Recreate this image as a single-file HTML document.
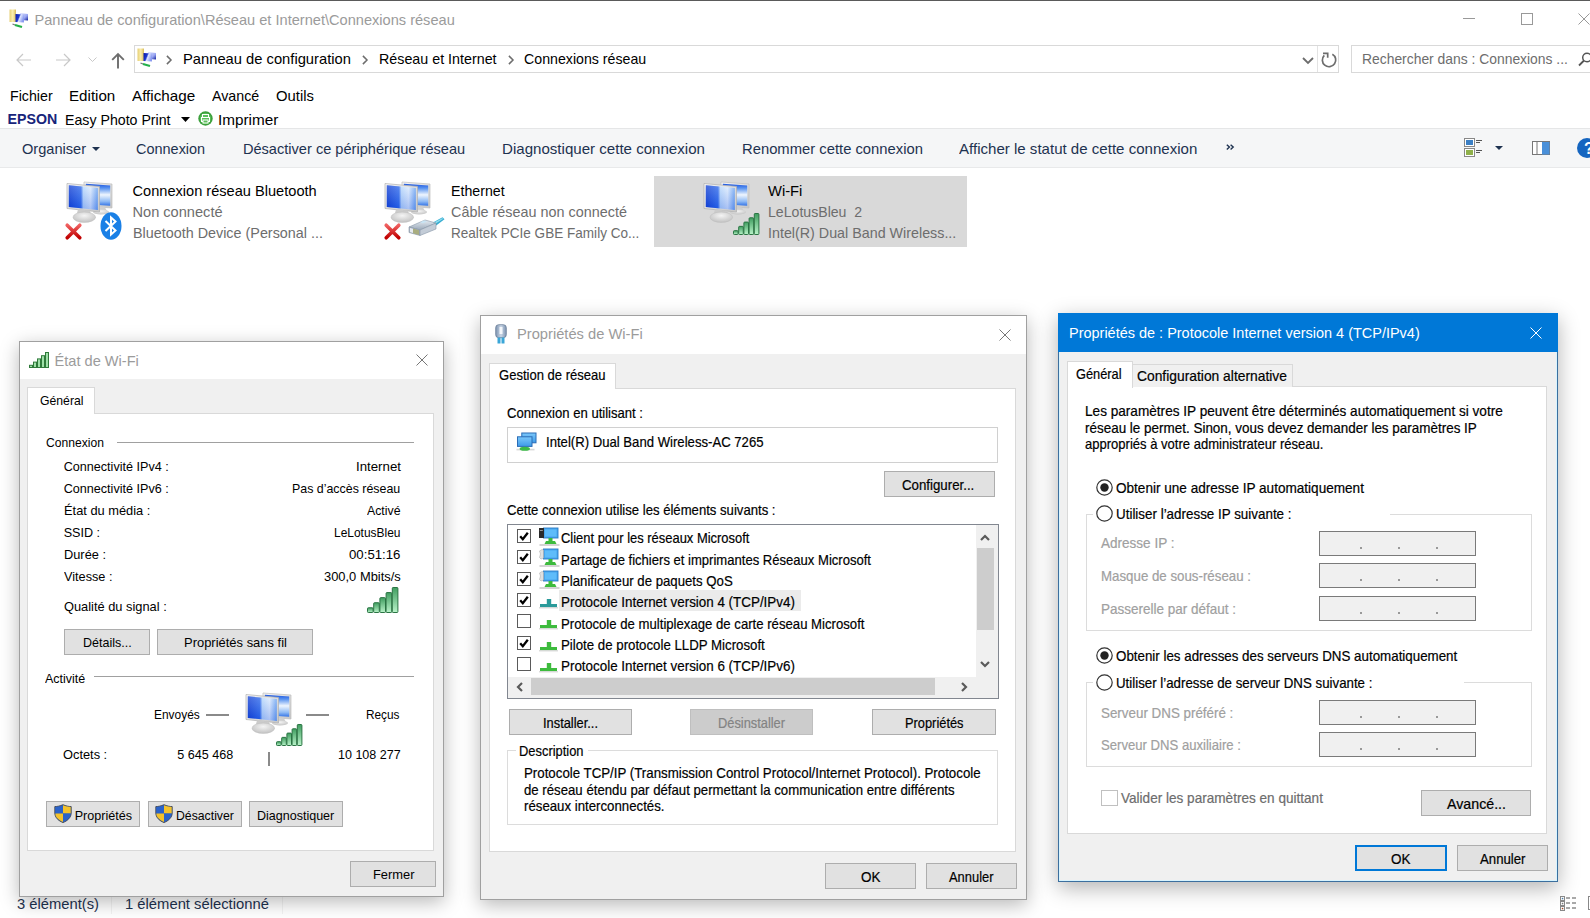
<!DOCTYPE html>
<html><head><meta charset="utf-8"><style>
html,body{margin:0;padding:0;}
body{width:1590px;height:918px;position:relative;overflow:hidden;background:#fff;font-family:"Liberation Sans",sans-serif;}
.t{position:absolute;white-space:nowrap;line-height:1;}
svg{overflow:visible}
</style></head><body>
<div style="position:absolute;left:0px;top:0px;width:1590px;height:1px;box-sizing:border-box;background:#5a5a5a;"></div>
<div class="t" style="left:34.50px;top:13.04px;font-size:14.600px;color:#9b9b9b;">Panneau de configuration\Réseau et Internet\Connexions réseau</div>
<div style="position:absolute;left:1463px;top:18px;width:12px;height:1px;box-sizing:border-box;background:#999;"></div>
<div style="position:absolute;left:1521px;top:13px;width:12px;height:12px;box-sizing:border-box;border:1px solid #999;"></div>
<svg style="position:absolute;left:1578px;top:13px" width="12" height="12" viewBox="0 0 12 12"><path d="M0.5 0.5L11.5 11.5M11.5 0.5L0.5 11.5" stroke="#999" stroke-width="1"/></svg>
<svg style="position:absolute;left:16px;top:53px" width="16" height="14" viewBox="0 0 16 14"><path d="M1 7H15M7 1L1 7L7 13" fill="none" stroke="#c8c8c8" stroke-width="1.2"/></svg>
<svg style="position:absolute;left:55px;top:53px" width="16" height="14" viewBox="0 0 16 14"><path d="M1 7H15M9 1L15 7L9 13" fill="none" stroke="#c8c8c8" stroke-width="1.2"/></svg>
<svg style="position:absolute;left:88px;top:57px" width="9" height="6" viewBox="0 0 9 6"><path d="M0.5 0.5L4.5 4.5L8.5 0.5" fill="none" stroke="#c8c8c8" stroke-width="1"/></svg>
<svg style="position:absolute;left:111px;top:52px" width="14" height="17" viewBox="0 0 14 17"><path d="M7 16.5V2M1.2 7.8L7 2L12.8 7.8" fill="none" stroke="#6d6d6d" stroke-width="1.9"/></svg>
<div style="position:absolute;left:134px;top:45px;width:1205px;height:28px;box-sizing:border-box;border:1px solid #d9d9d9;"></div>
<div style="position:absolute;left:1317px;top:46px;width:1px;height:26px;box-sizing:border-box;background:#e3e3e3;"></div>
<svg style="position:absolute;left:1302px;top:57px" width="12" height="8" viewBox="0 0 12 8"><path d="M1 1L6 6L11 1" fill="none" stroke="#6d6d6d" stroke-width="1.8"/></svg>
<svg style="position:absolute;left:1321px;top:52px" width="16" height="16" viewBox="0 0 16 16"><path d="M11.35 2.2A6.7 6.7 0 1 1 3.3 3.3" fill="none" stroke="#6d6d6d" stroke-width="1.7"/><path d="M2 1.3H6.7V5.8" fill="none" stroke="#6d6d6d" stroke-width="1.7"/></svg>
<svg style="position:absolute;left:166px;top:55px" width="6" height="10" viewBox="0 0 6 10"><path d="M0.9 0.9L5 5L0.9 9.1" fill="none" stroke="#6d6d6d" stroke-width="1.5"/></svg>
<div class="t" style="left:182.60px;top:51.64px;font-size:14.600px;color:#000;transform:scaleX(1.0095);transform-origin:0 0;">Panneau de configuration</div>
<svg style="position:absolute;left:362px;top:55px" width="6" height="10" viewBox="0 0 6 10"><path d="M0.9 0.9L5 5L0.9 9.1" fill="none" stroke="#6d6d6d" stroke-width="1.5"/></svg>
<div class="t" style="left:378.80px;top:51.64px;font-size:14.600px;color:#000;transform:scaleX(0.9790);transform-origin:0 0;">Réseau et Internet</div>
<svg style="position:absolute;left:508px;top:55px" width="6" height="10" viewBox="0 0 6 10"><path d="M0.9 0.9L5 5L0.9 9.1" fill="none" stroke="#6d6d6d" stroke-width="1.5"/></svg>
<div class="t" style="left:524.20px;top:51.64px;font-size:14.600px;color:#000;transform:scaleX(0.9721);transform-origin:0 0;">Connexions réseau</div>
<div style="position:absolute;left:1351px;top:45px;width:250px;height:28px;box-sizing:border-box;border:1px solid #d9d9d9;"></div>
<div class="t" style="left:1361.50px;top:52.14px;font-size:14.600px;color:#6d6d6d;transform:scaleX(0.9507);transform-origin:0 0;">Rechercher dans : Connexions ...</div>
<svg style="position:absolute;left:1578px;top:52px" width="14" height="14" viewBox="0 0 14 14"><circle cx="9" cy="5.5" r="4.3" fill="none" stroke="#555" stroke-width="1.5"/><path d="M6 8.5L1 13.5" stroke="#555" stroke-width="1.8"/></svg>
<div class="t" style="left:10.00px;top:88.84px;font-size:14.600px;color:#000;transform:scaleX(0.9747);transform-origin:0 0;">Fichier</div>
<div class="t" style="left:69.40px;top:88.84px;font-size:14.600px;color:#000;transform:scaleX(1.0372);transform-origin:0 0;">Edition</div>
<div class="t" style="left:132.40px;top:88.84px;font-size:14.600px;color:#000;transform:scaleX(1.0427);transform-origin:0 0;">Affichage</div>
<div class="t" style="left:212.30px;top:88.84px;font-size:14.600px;color:#000;transform:scaleX(0.9766);transform-origin:0 0;">Avancé</div>
<div class="t" style="left:276.00px;top:88.84px;font-size:14.600px;color:#000;transform:scaleX(1.0155);transform-origin:0 0;">Outils</div>
<div class="t" style="left:7.60px;top:112.48px;font-size:14.196px;color:#17247a;font-weight:bold;">EPSON</div>
<div class="t" style="left:65.40px;top:112.84px;font-size:14.600px;color:#000;transform:scaleX(0.9711);transform-origin:0 0;">Easy Photo Print</div>
<svg style="position:absolute;left:181px;top:117px" width="9" height="5" viewBox="0 0 9 5"><path d="M0 0H9L4.5 5Z" fill="#000"/></svg>
<svg style="position:absolute;left:198px;top:111px" width="15" height="15" viewBox="0 0 15 15"><circle cx="7.5" cy="7.5" r="7.2" fill="#3ca03c"/><circle cx="7.5" cy="7.5" r="5.5" fill="#5cc05c"/><rect x="4.5" y="3.5" width="6" height="3" fill="none" stroke="#fff" stroke-width="1"/><rect x="3.5" y="6.5" width="8" height="4" fill="none" stroke="#fff" stroke-width="1"/><rect x="5" y="9" width="5" height="3" fill="#5cc05c" stroke="#fff" stroke-width="1"/></svg>
<div class="t" style="left:218.30px;top:112.84px;font-size:14.600px;color:#000;transform:scaleX(1.0488);transform-origin:0 0;">Imprimer</div>
<div style="position:absolute;left:0px;top:128px;width:1590px;height:40px;box-sizing:border-box;background:#f5f6f7;border-top:1px solid #e5e6e7;border-bottom:1px solid #e8e9ea;"></div>
<div class="t" style="left:22.00px;top:141.54px;font-size:14.600px;color:#1e3250;">Organiser</div>
<svg style="position:absolute;left:92px;top:147px" width="8" height="4" viewBox="0 0 8 4"><path d="M0 0H8L4 4Z" fill="#1e3250"/></svg>
<div class="t" style="left:136.40px;top:141.54px;font-size:14.600px;color:#1e3250;transform:scaleX(0.9913);transform-origin:0 0;">Connexion</div>
<div class="t" style="left:242.90px;top:141.54px;font-size:14.600px;color:#1e3250;">Désactiver ce périphérique réseau</div>
<div class="t" style="left:502.00px;top:141.54px;font-size:14.600px;color:#1e3250;transform:scaleX(1.0335);transform-origin:0 0;">Diagnostiquer cette connexion</div>
<div class="t" style="left:741.70px;top:141.54px;font-size:14.600px;color:#1e3250;transform:scaleX(1.0138);transform-origin:0 0;">Renommer cette connexion</div>
<div class="t" style="left:959.30px;top:141.54px;font-size:14.600px;color:#1e3250;transform:scaleX(1.0318);transform-origin:0 0;">Afficher le statut de cette connexion</div>
<svg style="position:absolute;left:1226px;top:144px" width="8" height="7" viewBox="0 0 8 7"><path d="M0.8 0.8L3.4 3.1L0.8 5.4M4.6 0.8L7.2 3.1L4.6 5.4" fill="none" stroke="#1e3250" stroke-width="1.4"/></svg>
<svg style="position:absolute;left:1464px;top:138px" width="19" height="19" viewBox="0 0 19 19"><rect x="0.5" y="0.5" width="10" height="8" fill="#fff" stroke="#888"/><rect x="2" y="2" width="7" height="5" fill="#3b7fc4"/><rect x="0.5" y="10.5" width="10" height="8" fill="#fff" stroke="#888"/><rect x="2" y="12" width="7" height="5" fill="#8fb04a"/><path d="M12 2.5H18M12 4.5H16M12 12.5H18M12 14.5H16" stroke="#555" stroke-width="1"/></svg>
<svg style="position:absolute;left:1495px;top:146px" width="8" height="4" viewBox="0 0 8 4"><path d="M0 0H8L4 4Z" fill="#1e3250"/></svg>
<svg style="position:absolute;left:1532px;top:141px" width="18" height="14" viewBox="0 0 18 14"><rect x="0.5" y="0.5" width="17" height="13" fill="#fff" stroke="#777"/><rect x="10" y="1" width="7.5" height="12.5" fill="#4a90d9"/><path d="M5 1V13" stroke="#777"/></svg>
<svg style="position:absolute;left:1577px;top:138px" width="20" height="20" viewBox="0 0 20 20"><circle cx="10" cy="10" r="10" fill="#1565c0"/><text x="7" y="16" font-family="Liberation Sans" font-weight="bold" font-size="16" fill="#fff">?</text></svg>
<div style="position:absolute;left:654px;top:176px;width:313px;height:71px;box-sizing:border-box;background:#d9d9d9;"></div>
<div class="t" style="left:132.50px;top:183.64px;font-size:14.600px;color:#000;">Connexion réseau Bluetooth</div>
<div class="t" style="left:132.50px;top:204.74px;font-size:14.600px;color:#6d6d6d;">Non connecté</div>
<div class="t" style="left:132.50px;top:225.94px;font-size:14.600px;color:#6d6d6d;transform:scaleX(0.9837);transform-origin:0 0;">Bluetooth Device (Personal ...</div>
<div class="t" style="left:451.00px;top:183.64px;font-size:14.600px;color:#000;transform:scaleX(0.9730);transform-origin:0 0;">Ethernet</div>
<div class="t" style="left:451.00px;top:204.74px;font-size:14.600px;color:#6d6d6d;transform:scaleX(0.9856);transform-origin:0 0;">Câble réseau non connecté</div>
<div class="t" style="left:451.00px;top:225.94px;font-size:14.600px;color:#6d6d6d;transform:scaleX(0.9288);transform-origin:0 0;">Realtek PCIe GBE Family Co...</div>
<div class="t" style="left:768.30px;top:183.64px;font-size:14.600px;color:#000;transform:scaleX(1.0103);transform-origin:0 0;">Wi-Fi</div>
<div class="t" style="left:768.30px;top:204.74px;font-size:14.600px;color:#6d6d6d;transform:scaleX(0.9670);transform-origin:0 0;white-space:pre;">LeLotusBleu  2</div>
<div class="t" style="left:768.30px;top:225.94px;font-size:14.600px;color:#6d6d6d;transform:scaleX(0.9797);transform-origin:0 0;">Intel(R) Dual Band Wireless...</div>
<div class="t" style="left:17.00px;top:897.14px;font-size:14.600px;color:#1e3250;transform:scaleX(1.0106);transform-origin:0 0;">3 élément(s)</div>
<div class="t" style="left:125.00px;top:897.14px;font-size:14.600px;color:#1e3250;transform:scaleX(1.0138);transform-origin:0 0;">1 élément sélectionné</div>
<div style="position:absolute;left:111px;top:894px;width:1px;height:20px;box-sizing:border-box;background:#f3f3f3;"></div>
<div style="position:absolute;left:282px;top:894px;width:1px;height:20px;box-sizing:border-box;background:#f3f3f3;"></div>
<div style="position:absolute;left:19px;top:341px;width:425px;height:556px;box-sizing:border-box;background:#f0f0f0;border:1px solid #a0a0a0;box-shadow:0 5px 18px rgba(0,0,0,0.28);"></div>
<div style="position:absolute;left:20px;top:342px;width:423px;height:37px;box-sizing:border-box;background:#fff;"></div>
<svg style="position:absolute;left:29px;top:352px" width="20" height="16" viewBox="0 0 20 16"><rect x="0.50" y="13.30" width="3.00" height="2.20" fill="#9fe0a8" stroke="#2f7a3a" stroke-width="1"/><rect x="4.50" y="10.10" width="3.00" height="5.40" fill="#9fe0a8" stroke="#2f7a3a" stroke-width="1"/><rect x="8.50" y="6.90" width="3.00" height="8.60" fill="#9fe0a8" stroke="#2f7a3a" stroke-width="1"/><rect x="12.50" y="3.70" width="3.00" height="11.80" fill="#9fe0a8" stroke="#2f7a3a" stroke-width="1"/><rect x="16.50" y="0.50" width="3.00" height="15.00" fill="#9fe0a8" stroke="#2f7a3a" stroke-width="1"/></svg>
<div class="t" style="left:54.50px;top:354.14px;font-size:14.600px;color:#9b9b9b;">État de Wi-Fi</div>
<svg style="position:absolute;left:416px;top:354px" width="12" height="12" viewBox="0 0 12 12"><path d="M0.5 0.5L11.5 11.5M11.5 0.5L0.5 11.5" stroke="#777" stroke-width="1"/></svg>
<div style="position:absolute;left:27px;top:413px;width:407px;height:438px;box-sizing:border-box;background:#fff;border:1px solid #d9d9d9;"></div>
<div style="position:absolute;left:27px;top:387px;width:68px;height:27px;box-sizing:border-box;background:#fff;border:1px solid #d9d9d9;border-bottom:none;"></div>
<div class="t" style="left:39.50px;top:394.63px;font-size:12.600px;color:#000;transform:scaleX(0.9704);transform-origin:0 0;">Général</div>
<div class="t" style="left:45.70px;top:437.33px;font-size:12.600px;color:#000;transform:scaleX(0.9611);transform-origin:0 0;">Connexion</div>
<div style="position:absolute;left:117px;top:442px;width:297px;height:1px;box-sizing:border-box;background:#a0a0a0;"></div>
<div class="t" style="left:63.70px;top:461.33px;font-size:12.600px;color:#000;">Connectivité IPv4 :</div>
<div class="t" style="left:355.60px;top:461.33px;font-size:12.600px;color:#000;transform:scaleX(1.0532);transform-origin:0 0;">Internet</div>
<div class="t" style="left:63.70px;top:483.33px;font-size:12.600px;color:#000;">Connectivité IPv6 :</div>
<div class="t" style="left:292.30px;top:483.33px;font-size:12.600px;color:#000;transform:scaleX(0.9849);transform-origin:0 0;">Pas d’accès réseau</div>
<div class="t" style="left:63.70px;top:505.33px;font-size:12.600px;color:#000;transform:scaleX(1.0195);transform-origin:0 0;">État du média :</div>
<div class="t" style="left:367.10px;top:505.33px;font-size:12.600px;color:#000;transform:scaleX(0.9763);transform-origin:0 0;">Activé</div>
<div class="t" style="left:63.70px;top:527.33px;font-size:12.600px;color:#000;">SSID :</div>
<div class="t" style="left:334.10px;top:527.33px;font-size:12.600px;color:#000;transform:scaleX(0.9492);transform-origin:0 0;">LeLotusBleu</div>
<div class="t" style="left:63.70px;top:549.33px;font-size:12.600px;color:#000;transform:scaleX(1.0165);transform-origin:0 0;">Durée :</div>
<div class="t" style="left:349.10px;top:549.33px;font-size:12.600px;color:#000;transform:scaleX(1.0500);transform-origin:0 0;">00:51:16</div>
<div class="t" style="left:63.70px;top:571.33px;font-size:12.600px;color:#000;transform:scaleX(1.0085);transform-origin:0 0;">Vitesse :</div>
<div class="t" style="left:323.80px;top:571.33px;font-size:12.600px;color:#000;transform:scaleX(1.0249);transform-origin:0 0;">300,0 Mbits/s</div>
<div class="t" style="left:63.60px;top:600.83px;font-size:12.600px;color:#000;transform:scaleX(1.0192);transform-origin:0 0;">Qualité du signal :</div>
<svg style="position:absolute;left:367px;top:587px" width="31" height="26" viewBox="0 0 31 26"><defs><linearGradient id="g1" x1="0" x2="0" y1="0" y2="1"><stop offset="0" stop-color="#3f9d5f"/><stop offset="1" stop-color="#b9f3c9"/></linearGradient></defs><rect x="0.50" y="20.78" width="5.60" height="4.72" rx="0.8" fill="url(#g1)" stroke="#2a7443" stroke-width="1"/><rect x="6.70" y="15.71" width="5.60" height="9.79" rx="0.8" fill="url(#g1)" stroke="#2a7443" stroke-width="1"/><rect x="12.90" y="10.64" width="5.60" height="14.86" rx="0.8" fill="url(#g1)" stroke="#2a7443" stroke-width="1"/><rect x="19.10" y="5.57" width="5.60" height="19.93" rx="0.8" fill="url(#g1)" stroke="#2a7443" stroke-width="1"/><rect x="25.30" y="0.50" width="5.60" height="25.00" rx="0.8" fill="url(#g1)" stroke="#2a7443" stroke-width="1"/></svg>
<div style="position:absolute;left:64px;top:629px;width:86px;height:26px;box-sizing:border-box;background:#e1e1e1;border:1px solid #adadad;"></div>
<div class="t" style="left:82.65px;top:637.33px;font-size:12.600px;color:#000;transform:scaleX(0.9936);transform-origin:0 0;">Détails...</div>
<div style="position:absolute;left:157px;top:629px;width:156px;height:26px;box-sizing:border-box;background:#e1e1e1;border:1px solid #adadad;"></div>
<div class="t" style="left:183.50px;top:637.33px;font-size:12.600px;color:#000;transform:scaleX(1.0285);transform-origin:0 0;">Propriétés sans fil</div>
<div class="t" style="left:45.30px;top:672.83px;font-size:12.600px;color:#000;transform:scaleX(0.9899);transform-origin:0 0;">Activité</div>
<div style="position:absolute;left:94px;top:676px;width:320px;height:1px;box-sizing:border-box;background:#a0a0a0;"></div>
<div class="t" style="left:154.40px;top:709.03px;font-size:12.600px;color:#000;transform:scaleX(0.9477);transform-origin:0 0;">Envoyés</div>
<div style="position:absolute;left:206px;top:714px;width:23px;height:2px;box-sizing:border-box;background:#8a8a8a;"></div>
<div style="position:absolute;left:306px;top:714px;width:23px;height:2px;box-sizing:border-box;background:#8a8a8a;"></div>
<div class="t" style="left:365.70px;top:709.03px;font-size:12.600px;color:#000;transform:scaleX(0.9380);transform-origin:0 0;">Reçus</div>
<div class="t" style="left:63.30px;top:748.63px;font-size:12.600px;color:#000;transform:scaleX(1.0182);transform-origin:0 0;">Octets :</div>
<div class="t" style="left:177.30px;top:748.63px;font-size:12.600px;color:#000;">5 645 468</div>
<div class="t" style="left:337.50px;top:748.63px;font-size:12.600px;color:#000;transform:scaleX(0.9943);transform-origin:0 0;">10 108 277</div>
<div style="position:absolute;left:268px;top:752px;width:2px;height:14px;box-sizing:border-box;background:#8a8a8a;"></div>
<svg style="position:absolute;left:245px;top:692px" width="47" height="42" viewBox="0 0 47 42"><defs>
<linearGradient id="g2" x1="0" y1="0" x2="1" y2="0"><stop offset="0" stop-color="#0a3ad2"/><stop offset="0.42" stop-color="#2563ea"/><stop offset="0.5" stop-color="#b8d9fc"/><stop offset="0.75" stop-color="#dcecfe"/><stop offset="1" stop-color="#6aa4f2"/></linearGradient>
<linearGradient id="g6" x1="0" y1="0" x2="0" y2="1"><stop offset="0" stop-color="#fff" stop-opacity="0.25"/><stop offset="1" stop-color="#0a3ad2" stop-opacity="0.25"/></linearGradient>
<linearGradient id="g3" x1="0" y1="0" x2="1" y2="1"><stop offset="0" stop-color="#f6f6f6"/><stop offset="1" stop-color="#c6c6c6"/></linearGradient>
<linearGradient id="g4" x1="0" y1="0" x2="0" y2="1"><stop offset="0" stop-color="#1c55e0"/><stop offset="0.2" stop-color="#5a94f0"/><stop offset="0.5" stop-color="#eef5fe"/><stop offset="0.8" stop-color="#8ebaf5"/><stop offset="1" stop-color="#3373e6"/></linearGradient>
<radialGradient id="g5" cx="0.5" cy="0.35" r="0.65"><stop offset="0" stop-color="#f4f4f4"/><stop offset="1" stop-color="#c2c2c2"/></radialGradient>
</defs>
<path d="M18 1L46 3V27L18 25Z" fill="url(#g3)" stroke="#bdbdbd" stroke-width="0.7"/>
<path d="M19.8 2.8L44.2 4.5V24.8L19.8 23.2Z" fill="url(#g4)"/>
<path d="M30 26L29 30H41L39 26.5Z" fill="#cfcfcf"/>
<ellipse cx="35" cy="31" rx="8" ry="2.6" fill="url(#g5)"/>
<path d="M1 2.5L33.5 5.5V31L1 27.5Z" fill="url(#g3)" stroke="#b0b0b0" stroke-width="0.7"/>
<path d="M2.8 4.3L31.8 7V28.9L2.8 25.9Z" fill="url(#g2)"/>
<path d="M2.8 4.3L31.8 7V28.9L2.8 25.9Z" fill="url(#g6)"/>
<path d="M12 28.5L24 29.8L25 33L11 32Z" fill="#cbcbcb"/>
<ellipse cx="18.3" cy="36.2" rx="11.3" ry="5.2" fill="url(#g5)" stroke="#bcbcbc" stroke-width="0.5"/>
</svg>
<svg style="position:absolute;left:276px;top:724px" width="26" height="22" viewBox="0 0 26 22"><defs><linearGradient id="g7" x1="0" x2="0" y1="0" y2="1"><stop offset="0" stop-color="#3f9d5f"/><stop offset="1" stop-color="#b9f3c9"/></linearGradient></defs><rect x="0.50" y="17.66" width="4.60" height="3.84" rx="0.8" fill="url(#g7)" stroke="#2a7443" stroke-width="1"/><rect x="5.70" y="13.37" width="4.60" height="8.13" rx="0.8" fill="url(#g7)" stroke="#2a7443" stroke-width="1"/><rect x="10.90" y="9.08" width="4.60" height="12.42" rx="0.8" fill="url(#g7)" stroke="#2a7443" stroke-width="1"/><rect x="16.10" y="4.79" width="4.60" height="16.71" rx="0.8" fill="url(#g7)" stroke="#2a7443" stroke-width="1"/><rect x="21.30" y="0.50" width="4.60" height="21.00" rx="0.8" fill="url(#g7)" stroke="#2a7443" stroke-width="1"/></svg>
<div style="position:absolute;left:46px;top:801px;width:94px;height:26px;box-sizing:border-box;background:#e1e1e1;border:1px solid #adadad;"></div>
<svg style="position:absolute;left:54px;top:804px" width="18" height="19" viewBox="0 0 18 19"><path d="M9 0.7C6 2 3 2.6 0.8 2.6V9C0.8 13.5 4.5 16.8 9 18.6C13.5 16.8 17.2 13.5 17.2 9V2.6C15 2.6 12 2 9 0.7Z" fill="#2f5eb0" stroke="#3a3a3a" stroke-width="0.8"/><path d="M9 1.3V9.6H1.3V2.9C3.4 2.9 6.2 2.4 9 1.3Z" fill="#2a62c9"/><path d="M9 1.3C11.8 2.4 14.6 2.9 16.7 2.9V9.6H9Z" fill="#f4c22b"/><path d="M1.3 9.6H9V18C5 16.3 1.3 13.4 1.3 9.6Z" fill="#f4c22b"/><path d="M9 9.6H16.7C16.7 13.4 13 16.3 9 18Z" fill="#2a62c9"/></svg>
<div class="t" style="left:74.70px;top:809.53px;font-size:12.600px;color:#000;">Propriétés</div>
<div style="position:absolute;left:148px;top:801px;width:94px;height:26px;box-sizing:border-box;background:#e1e1e1;border:1px solid #adadad;"></div>
<svg style="position:absolute;left:155px;top:804px" width="18" height="19" viewBox="0 0 18 19"><path d="M9 0.7C6 2 3 2.6 0.8 2.6V9C0.8 13.5 4.5 16.8 9 18.6C13.5 16.8 17.2 13.5 17.2 9V2.6C15 2.6 12 2 9 0.7Z" fill="#2f5eb0" stroke="#3a3a3a" stroke-width="0.8"/><path d="M9 1.3V9.6H1.3V2.9C3.4 2.9 6.2 2.4 9 1.3Z" fill="#2a62c9"/><path d="M9 1.3C11.8 2.4 14.6 2.9 16.7 2.9V9.6H9Z" fill="#f4c22b"/><path d="M1.3 9.6H9V18C5 16.3 1.3 13.4 1.3 9.6Z" fill="#f4c22b"/><path d="M9 9.6H16.7C16.7 13.4 13 16.3 9 18Z" fill="#2a62c9"/></svg>
<div class="t" style="left:175.50px;top:809.53px;font-size:12.600px;color:#000;transform:scaleX(0.9728);transform-origin:0 0;">Désactiver</div>
<div style="position:absolute;left:249px;top:801px;width:94px;height:26px;box-sizing:border-box;background:#e1e1e1;border:1px solid #adadad;"></div>
<div class="t" style="left:257.40px;top:809.53px;font-size:12.600px;color:#000;transform:scaleX(0.9942);transform-origin:0 0;">Diagnostiquer</div>
<div style="position:absolute;left:350px;top:861px;width:86px;height:26px;box-sizing:border-box;background:#e1e1e1;border:1px solid #adadad;"></div>
<div class="t" style="left:372.50px;top:869.43px;font-size:12.600px;color:#000;transform:scaleX(1.0222);transform-origin:0 0;">Fermer</div>
<div style="position:absolute;left:480px;top:315px;width:547px;height:585px;box-sizing:border-box;background:#f0f0f0;border:1px solid #a0a0a0;box-shadow:0 5px 18px rgba(0,0,0,0.28);"></div>
<div style="position:absolute;left:481px;top:316px;width:545px;height:38px;box-sizing:border-box;background:#fff;"></div>
<svg style="position:absolute;left:495px;top:324px" width="12" height="20" viewBox="0 0 12 20"><defs><linearGradient id="ad" x1="0" x2="1"><stop offset="0" stop-color="#7d93b0"/><stop offset="0.5" stop-color="#c9d6e6"/><stop offset="1" stop-color="#7d93b0"/></linearGradient></defs><rect x="0.7" y="0.7" width="10.6" height="13" rx="3" fill="url(#ad)" stroke="#6b7f99" stroke-width="0.8"/><rect x="4.5" y="3" width="3" height="7" fill="#f4f7fb"/><rect x="2.5" y="13.5" width="3" height="6" fill="#3aa6d8"/><rect x="6.5" y="13.5" width="3" height="6" fill="#3aa6d8"/></svg>
<div class="t" style="left:516.60px;top:327.34px;font-size:14.600px;color:#9b9b9b;transform:scaleX(1.0061);transform-origin:0 0;">Propriétés de Wi-Fi</div>
<svg style="position:absolute;left:999px;top:329px" width="12" height="12" viewBox="0 0 12 12"><path d="M0.5 0.5L11.5 11.5M11.5 0.5L0.5 11.5" stroke="#777" stroke-width="1"/></svg>
<div style="position:absolute;left:489px;top:388px;width:527px;height:464px;box-sizing:border-box;background:#fff;border:1px solid #d9d9d9;"></div>
<div style="position:absolute;left:489px;top:363px;width:127px;height:26px;box-sizing:border-box;background:#fff;border:1px solid #d9d9d9;border-bottom:none;"></div>
<div class="t" style="left:498.50px;top:367.30px;font-size:15.000px;color:#000;transform:scaleX(0.8688);transform-origin:0 0;-webkit-text-stroke:0.2px;">Gestion de réseau</div>
<div class="t" style="left:507.00px;top:405.30px;font-size:15.000px;color:#000;transform:scaleX(0.8722);transform-origin:0 0;-webkit-text-stroke:0.2px;">Connexion en utilisant :</div>
<div style="position:absolute;left:507px;top:427px;width:491px;height:36px;box-sizing:border-box;border:1px solid #d0d0d0;background:#fff;"></div>
<svg style="position:absolute;left:516px;top:432px" width="21" height="20" viewBox="0 0 21 20"><defs><linearGradient id="adg" x1="0" x2="0" y1="0" y2="1"><stop offset="0" stop-color="#7cc8fa"/><stop offset="1" stop-color="#3d9ae8"/></linearGradient></defs><rect x="5.8" y="1" width="14.2" height="9.8" fill="url(#adg)" stroke="#2b6cb6" stroke-width="1"/><rect x="1.5" y="4.8" width="14.5" height="9.6" fill="url(#adg)" stroke="#2b6cb6" stroke-width="1"/><rect x="0.5" y="16.8" width="18" height="1.6" fill="#d8d8d8"/><ellipse cx="8.8" cy="16.8" rx="5.2" ry="2" fill="#3cba48"/></svg>
<div class="t" style="left:546.00px;top:434.20px;font-size:15.000px;color:#000;transform:scaleX(0.8755);transform-origin:0 0;-webkit-text-stroke:0.2px;">Intel(R) Dual Band Wireless-AC 7265</div>
<div style="position:absolute;left:884px;top:471px;width:111px;height:26px;box-sizing:border-box;background:#e1e1e1;border:1px solid #adadad;"></div>
<div class="t" style="left:902.00px;top:477.40px;font-size:15.000px;color:#000;transform:scaleX(0.8848);transform-origin:0 0;-webkit-text-stroke:0.2px;">Configurer...</div>
<div class="t" style="left:507.00px;top:501.60px;font-size:15.000px;color:#000;transform:scaleX(0.8751);transform-origin:0 0;-webkit-text-stroke:0.2px;">Cette connexion utilise les éléments suivants :</div>
<div style="position:absolute;left:507px;top:524px;width:492px;height:175px;box-sizing:border-box;border:1px solid #828790;background:#fff;"></div>
<div style="position:absolute;left:559px;top:590px;width:242px;height:21px;box-sizing:border-box;background:#ebebeb;"></div>
<div style="position:absolute;left:517px;top:529px;width:14px;height:14px;box-sizing:border-box;border:1px solid #5a5a5a;background:#fff;"></div>
<svg style="position:absolute;left:519px;top:531px" width="10" height="10" viewBox="0 0 10 10"><path d="M1.2 5.2L3.8 8.2L8.8 1.8" fill="none" stroke="#000" stroke-width="2.3"/></svg>
<svg style="position:absolute;left:538px;top:527px" width="21" height="21" viewBox="0 0 21 21"><rect x="5.5" y="1" width="14.5" height="10" fill="#48a6ee" stroke="#2a7cc6" stroke-width="0.9"/><rect x="7" y="2.5" width="11.5" height="7" fill="#5ebcfa"/><rect x="1" y="1" width="5" height="10" fill="#2a2a2a"/><rect x="1.8" y="3" width="3" height="1" fill="#999"/><rect x="10.5" y="11" width="4" height="3" fill="#3dbb3d"/><path d="M8 14H17L18.5 17H6.5Z" fill="#3dbb3d"/><rect x="1.5" y="17" width="20" height="2" fill="#d4d4d4"/></svg>
<div class="t" style="left:561.00px;top:530.40px;font-size:15.000px;color:#000;transform:scaleX(0.8625);transform-origin:0 0;-webkit-text-stroke:0.2px;">Client pour les réseaux Microsoft</div>
<div style="position:absolute;left:517px;top:550px;width:14px;height:14px;box-sizing:border-box;border:1px solid #5a5a5a;background:#fff;"></div>
<svg style="position:absolute;left:519px;top:552px" width="10" height="10" viewBox="0 0 10 10"><path d="M1.2 5.2L3.8 8.2L8.8 1.8" fill="none" stroke="#000" stroke-width="2.3"/></svg>
<svg style="position:absolute;left:538px;top:548px" width="21" height="21" viewBox="0 0 21 21"><rect x="5.5" y="1" width="14.5" height="10" fill="#48a6ee" stroke="#2a7cc6" stroke-width="0.9"/><rect x="7" y="2.5" width="11.5" height="7" fill="#5ebcfa"/><path d="M1.5 3L4 1.5L5.5 2V10L3 11L1.5 9.5L2.5 6Z" fill="#e0e0e0" stroke="#b0b0b0" stroke-width="0.6"/><rect x="10.5" y="11" width="4" height="3" fill="#3dbb3d"/><path d="M8 14H17L18.5 17H6.5Z" fill="#3dbb3d"/><rect x="1.5" y="17" width="20" height="2" fill="#d4d4d4"/></svg>
<div class="t" style="left:561.00px;top:551.70px;font-size:15.000px;color:#000;transform:scaleX(0.8708);transform-origin:0 0;-webkit-text-stroke:0.2px;">Partage de fichiers et imprimantes Réseaux Microsoft</div>
<div style="position:absolute;left:517px;top:572px;width:14px;height:14px;box-sizing:border-box;border:1px solid #5a5a5a;background:#fff;"></div>
<svg style="position:absolute;left:519px;top:574px" width="10" height="10" viewBox="0 0 10 10"><path d="M1.2 5.2L3.8 8.2L8.8 1.8" fill="none" stroke="#000" stroke-width="2.3"/></svg>
<svg style="position:absolute;left:538px;top:570px" width="21" height="21" viewBox="0 0 21 21"><rect x="5.5" y="1" width="14.5" height="10" fill="#48a6ee" stroke="#2a7cc6" stroke-width="0.9"/><rect x="7" y="2.5" width="11.5" height="7" fill="#5ebcfa"/><path d="M1.5 3L4 1.5L5.5 2V10L3 11L1.5 9.5L2.5 6Z" fill="#e0e0e0" stroke="#b0b0b0" stroke-width="0.6"/><rect x="10.5" y="11" width="4" height="3" fill="#3dbb3d"/><path d="M8 14H17L18.5 17H6.5Z" fill="#3dbb3d"/><rect x="1.5" y="17" width="20" height="2" fill="#d4d4d4"/></svg>
<div class="t" style="left:561.00px;top:573.00px;font-size:15.000px;color:#000;transform:scaleX(0.8799);transform-origin:0 0;-webkit-text-stroke:0.2px;">Planificateur de paquets QoS</div>
<div style="position:absolute;left:517px;top:593px;width:14px;height:14px;box-sizing:border-box;border:1px solid #5a5a5a;background:#fff;"></div>
<svg style="position:absolute;left:519px;top:595px" width="10" height="10" viewBox="0 0 10 10"><path d="M1.2 5.2L3.8 8.2L8.8 1.8" fill="none" stroke="#000" stroke-width="2.3"/></svg>
<svg style="position:absolute;left:538px;top:597px" width="21" height="12" viewBox="0 0 21 12"><rect x="8.8" y="2" width="4.4" height="5" fill="#2a9a9a"/><rect x="2" y="7" width="17" height="3.2" fill="#2a9a9a"/><rect x="1" y="10.2" width="19" height="1.2" fill="#d4d4d4"/></svg>
<div class="t" style="left:561.00px;top:594.30px;font-size:15.000px;color:#000;transform:scaleX(0.8935);transform-origin:0 0;-webkit-text-stroke:0.2px;">Protocole Internet version 4 (TCP/IPv4)</div>
<div style="position:absolute;left:517px;top:614px;width:14px;height:14px;box-sizing:border-box;border:1px solid #5a5a5a;background:#fff;"></div>
<svg style="position:absolute;left:538px;top:618px" width="21" height="12" viewBox="0 0 21 12"><rect x="8.8" y="2" width="4.4" height="5" fill="#3dbb3d"/><rect x="2" y="7" width="17" height="3.2" fill="#3dbb3d"/><rect x="1" y="10.2" width="19" height="1.2" fill="#d4d4d4"/></svg>
<div class="t" style="left:561.00px;top:615.60px;font-size:15.000px;color:#000;transform:scaleX(0.8771);transform-origin:0 0;-webkit-text-stroke:0.2px;">Protocole de multiplexage de carte réseau Microsoft</div>
<div style="position:absolute;left:517px;top:636px;width:14px;height:14px;box-sizing:border-box;border:1px solid #5a5a5a;background:#fff;"></div>
<svg style="position:absolute;left:519px;top:638px" width="10" height="10" viewBox="0 0 10 10"><path d="M1.2 5.2L3.8 8.2L8.8 1.8" fill="none" stroke="#000" stroke-width="2.3"/></svg>
<svg style="position:absolute;left:538px;top:640px" width="21" height="12" viewBox="0 0 21 12"><rect x="8.8" y="2" width="4.4" height="5" fill="#3dbb3d"/><rect x="2" y="7" width="17" height="3.2" fill="#3dbb3d"/><rect x="1" y="10.2" width="19" height="1.2" fill="#d4d4d4"/></svg>
<div class="t" style="left:561.00px;top:636.90px;font-size:15.000px;color:#000;transform:scaleX(0.8835);transform-origin:0 0;-webkit-text-stroke:0.2px;">Pilote de protocole LLDP Microsoft</div>
<div style="position:absolute;left:517px;top:657px;width:14px;height:14px;box-sizing:border-box;border:1px solid #5a5a5a;background:#fff;"></div>
<svg style="position:absolute;left:538px;top:661px" width="21" height="12" viewBox="0 0 21 12"><rect x="8.8" y="2" width="4.4" height="5" fill="#3dbb3d"/><rect x="2" y="7" width="17" height="3.2" fill="#3dbb3d"/><rect x="1" y="10.2" width="19" height="1.2" fill="#d4d4d4"/></svg>
<div class="t" style="left:561.00px;top:658.20px;font-size:15.000px;color:#000;transform:scaleX(0.8935);transform-origin:0 0;-webkit-text-stroke:0.2px;">Protocole Internet version 6 (TCP/IPv6)</div>
<div style="position:absolute;left:976px;top:525px;width:22px;height:152px;box-sizing:border-box;background:#f0f0f0;"></div>
<div style="position:absolute;left:977px;top:548px;width:17px;height:82px;box-sizing:border-box;background:#cdcdcd;"></div>
<svg style="position:absolute;left:980px;top:534px" width="10" height="7" viewBox="0 0 10 7"><path d="M1 6L5 2L9 6" fill="none" stroke="#5a5a5a" stroke-width="2.2"/></svg>
<svg style="position:absolute;left:980px;top:661px" width="10" height="7" viewBox="0 0 10 7"><path d="M1 1L5 5L9 1" fill="none" stroke="#5a5a5a" stroke-width="2.2"/></svg>
<div style="position:absolute;left:508px;top:677px;width:490px;height:21px;box-sizing:border-box;background:#f0f0f0;"></div>
<div style="position:absolute;left:531px;top:678px;width:404px;height:17px;box-sizing:border-box;background:#cdcdcd;"></div>
<svg style="position:absolute;left:516px;top:682px" width="7" height="10" viewBox="0 0 7 10"><path d="M6 1L2 5L6 9" fill="none" stroke="#5a5a5a" stroke-width="2.2"/></svg>
<svg style="position:absolute;left:961px;top:682px" width="7" height="10" viewBox="0 0 7 10"><path d="M1 1L5 5L1 9" fill="none" stroke="#5a5a5a" stroke-width="2.2"/></svg>
<div style="position:absolute;left:509px;top:709px;width:123px;height:26px;box-sizing:border-box;background:#e1e1e1;border:1px solid #adadad;"></div>
<div class="t" style="left:543.00px;top:714.80px;font-size:15.000px;color:#000;transform:scaleX(0.8567);transform-origin:0 0;-webkit-text-stroke:0.2px;">Installer...</div>
<div style="position:absolute;left:690px;top:709px;width:123px;height:26px;box-sizing:border-box;background:#cccccc;border:1px solid #bfbfbf;"></div>
<div class="t" style="left:718.00px;top:714.80px;font-size:15.000px;color:#838383;transform:scaleX(0.8550);transform-origin:0 0;-webkit-text-stroke:0.2px;">Désinstaller</div>
<div style="position:absolute;left:872px;top:709px;width:124px;height:26px;box-sizing:border-box;background:#e1e1e1;border:1px solid #adadad;"></div>
<div class="t" style="left:904.75px;top:714.80px;font-size:15.000px;color:#000;transform:scaleX(0.8557);transform-origin:0 0;-webkit-text-stroke:0.2px;">Propriétés</div>
<div style="position:absolute;left:507px;top:750px;width:491px;height:75px;box-sizing:border-box;border:1px solid #dcdcdc;"></div>
<div style="position:absolute;left:516px;top:745px;width:72px;height:10px;box-sizing:border-box;background:#fff;"></div>
<div class="t" style="left:519.00px;top:742.80px;font-size:15.000px;color:#000;transform:scaleX(0.8597);transform-origin:0 0;-webkit-text-stroke:0.2px;">Description</div>
<div class="t" style="left:523.60px;top:765.10px;font-size:15.000px;color:#000;transform:scaleX(0.8853);transform-origin:0 0;-webkit-text-stroke:0.2px;">Protocole TCP/IP (Transmission Control Protocol/Internet Protocol). Protocole</div>
<div class="t" style="left:523.60px;top:781.50px;font-size:15.000px;color:#000;transform:scaleX(0.8800);transform-origin:0 0;-webkit-text-stroke:0.2px;">de réseau étendu par défaut permettant la communication entre différents</div>
<div class="t" style="left:523.60px;top:797.80px;font-size:15.000px;color:#000;transform:scaleX(0.8822);transform-origin:0 0;-webkit-text-stroke:0.2px;">réseaux interconnectés.</div>
<div style="position:absolute;left:825px;top:863px;width:91px;height:26px;box-sizing:border-box;background:#e1e1e1;border:1px solid #adadad;"></div>
<div class="t" style="left:860.75px;top:869.30px;font-size:15.000px;color:#000;transform:scaleX(0.8998);transform-origin:0 0;-webkit-text-stroke:0.2px;">OK</div>
<div style="position:absolute;left:926px;top:863px;width:91px;height:26px;box-sizing:border-box;background:#e1e1e1;border:1px solid #adadad;"></div>
<div class="t" style="left:949.25px;top:869.30px;font-size:15.000px;color:#000;transform:scaleX(0.8607);transform-origin:0 0;-webkit-text-stroke:0.2px;">Annuler</div>
<div style="position:absolute;left:1058px;top:313px;width:500px;height:569px;box-sizing:border-box;background:#f0f0f0;border:1px solid #3c6f9e;box-shadow:0 6px 20px rgba(0,0,0,0.3);"></div>
<div style="position:absolute;left:1059px;top:352px;width:498px;height:529px;box-sizing:border-box;border:1px solid #d8f4ff;border-top:none;"></div>
<div style="position:absolute;left:1058px;top:313px;width:500px;height:39px;box-sizing:border-box;background:#0078d7;"></div>
<div class="t" style="left:1069.40px;top:325.77px;font-size:14.800px;color:#fff;transform:scaleX(0.9781);transform-origin:0 0;">Propriétés de : Protocole Internet version 4 (TCP/IPv4)</div>
<svg style="position:absolute;left:1530px;top:327px" width="12" height="12" viewBox="0 0 12 12"><path d="M0.5 0.5L11.5 11.5M11.5 0.5L0.5 11.5" stroke="#fff" stroke-width="1"/></svg>
<div style="position:absolute;left:1067px;top:386px;width:480px;height:448px;box-sizing:border-box;background:#fff;border:1px solid #d9d9d9;"></div>
<div style="position:absolute;left:1132px;top:364px;width:161px;height:23px;box-sizing:border-box;background:#f0f0f0;border:1px solid #d9d9d9;border-bottom:none;"></div>
<div style="position:absolute;left:1067px;top:361px;width:66px;height:27px;box-sizing:border-box;background:#fff;border:1px solid #d9d9d9;border-bottom:none;"></div>
<div class="t" style="left:1076.30px;top:366.56px;font-size:14.100px;color:#000;transform:scaleX(0.9090);transform-origin:0 0;-webkit-text-stroke:0.2px;">Général</div>
<div class="t" style="left:1137.30px;top:368.76px;font-size:14.100px;color:#000;transform:scaleX(0.9814);transform-origin:0 0;-webkit-text-stroke:0.2px;">Configuration alternative</div>
<div class="t" style="left:1085.00px;top:404.26px;font-size:14.100px;color:#000;transform:scaleX(0.9650);transform-origin:0 0;-webkit-text-stroke:0.2px;">Les paramètres IP peuvent être déterminés automatiquement si votre</div>
<div class="t" style="left:1085.00px;top:420.86px;font-size:14.100px;color:#000;transform:scaleX(0.9545);transform-origin:0 0;-webkit-text-stroke:0.2px;">réseau le permet. Sinon, vous devez demander les paramètres IP</div>
<div class="t" style="left:1085.00px;top:437.06px;font-size:14.100px;color:#000;transform:scaleX(0.9250);transform-origin:0 0;-webkit-text-stroke:0.2px;">appropriés à votre administrateur réseau.</div>
<div style="position:absolute;left:1086px;top:514px;width:446px;height:117px;box-sizing:border-box;border:1px solid #dcdcdc;"></div>
<svg style="position:absolute;left:1096px;top:479px" width="17" height="17" viewBox="0 0 17 17"><circle cx="8.5" cy="8.5" r="7.7" fill="#fff" stroke="#333" stroke-width="1.2"/><circle cx="8.5" cy="8.5" r="4.2" fill="#222"/></svg>
<div class="t" style="left:1116.20px;top:481.06px;font-size:14.100px;color:#000;transform:scaleX(0.9627);transform-origin:0 0;-webkit-text-stroke:0.2px;">Obtenir une adresse IP automatiquement</div>
<div style="position:absolute;left:1093px;top:505px;width:297px;height:18px;box-sizing:border-box;background:#fff;"></div>
<svg style="position:absolute;left:1096px;top:505px" width="17" height="17" viewBox="0 0 17 17"><circle cx="8.5" cy="8.5" r="7.7" fill="#fff" stroke="#333" stroke-width="1.2"/></svg>
<div class="t" style="left:1116.20px;top:506.86px;font-size:14.100px;color:#000;transform:scaleX(0.9508);transform-origin:0 0;-webkit-text-stroke:0.2px;">Utiliser l’adresse IP suivante :</div>
<div class="t" style="left:1101.00px;top:536.46px;font-size:14.100px;color:#a0a0a0;transform:scaleX(0.9602);transform-origin:0 0;-webkit-text-stroke:0.2px;">Adresse IP :</div>
<div style="position:absolute;left:1319px;top:531px;width:157px;height:25px;box-sizing:border-box;background:#f0f0f0;border:1px solid #7a7a7a;"></div>
<div style="position:absolute;left:1360px;top:547px;width:2px;height:2px;box-sizing:border-box;background:#999;"></div>
<div style="position:absolute;left:1398px;top:547px;width:2px;height:2px;box-sizing:border-box;background:#999;"></div>
<div style="position:absolute;left:1436px;top:547px;width:2px;height:2px;box-sizing:border-box;background:#999;"></div>
<div class="t" style="left:1101.00px;top:569.06px;font-size:14.100px;color:#a0a0a0;transform:scaleX(0.9428);transform-origin:0 0;-webkit-text-stroke:0.2px;">Masque de sous-réseau :</div>
<div style="position:absolute;left:1319px;top:563px;width:157px;height:25px;box-sizing:border-box;background:#f0f0f0;border:1px solid #7a7a7a;"></div>
<div style="position:absolute;left:1360px;top:579px;width:2px;height:2px;box-sizing:border-box;background:#999;"></div>
<div style="position:absolute;left:1398px;top:579px;width:2px;height:2px;box-sizing:border-box;background:#999;"></div>
<div style="position:absolute;left:1436px;top:579px;width:2px;height:2px;box-sizing:border-box;background:#999;"></div>
<div class="t" style="left:1101.00px;top:601.96px;font-size:14.100px;color:#a0a0a0;transform:scaleX(0.9569);transform-origin:0 0;-webkit-text-stroke:0.2px;">Passerelle par défaut :</div>
<div style="position:absolute;left:1319px;top:596px;width:157px;height:25px;box-sizing:border-box;background:#f0f0f0;border:1px solid #7a7a7a;"></div>
<div style="position:absolute;left:1360px;top:612px;width:2px;height:2px;box-sizing:border-box;background:#999;"></div>
<div style="position:absolute;left:1398px;top:612px;width:2px;height:2px;box-sizing:border-box;background:#999;"></div>
<div style="position:absolute;left:1436px;top:612px;width:2px;height:2px;box-sizing:border-box;background:#999;"></div>
<svg style="position:absolute;left:1096px;top:647px" width="17" height="17" viewBox="0 0 17 17"><circle cx="8.5" cy="8.5" r="7.7" fill="#fff" stroke="#333" stroke-width="1.2"/><circle cx="8.5" cy="8.5" r="4.2" fill="#222"/></svg>
<div class="t" style="left:1116.20px;top:648.56px;font-size:14.100px;color:#000;transform:scaleX(0.9470);transform-origin:0 0;-webkit-text-stroke:0.2px;">Obtenir les adresses des serveurs DNS automatiquement</div>
<div style="position:absolute;left:1086px;top:682px;width:446px;height:85px;box-sizing:border-box;border:1px solid #dcdcdc;"></div>
<div style="position:absolute;left:1093px;top:673px;width:371px;height:18px;box-sizing:border-box;background:#fff;"></div>
<svg style="position:absolute;left:1096px;top:674px" width="17" height="17" viewBox="0 0 17 17"><circle cx="8.5" cy="8.5" r="7.7" fill="#fff" stroke="#333" stroke-width="1.2"/></svg>
<div class="t" style="left:1116.20px;top:675.66px;font-size:14.100px;color:#000;transform:scaleX(0.9433);transform-origin:0 0;-webkit-text-stroke:0.2px;">Utiliser l’adresse de serveur DNS suivante :</div>
<div class="t" style="left:1101.00px;top:705.56px;font-size:14.100px;color:#a0a0a0;transform:scaleX(0.9492);transform-origin:0 0;-webkit-text-stroke:0.2px;">Serveur DNS préféré :</div>
<div style="position:absolute;left:1319px;top:700px;width:157px;height:25px;box-sizing:border-box;background:#f0f0f0;border:1px solid #7a7a7a;"></div>
<div style="position:absolute;left:1360px;top:716px;width:2px;height:2px;box-sizing:border-box;background:#999;"></div>
<div style="position:absolute;left:1398px;top:716px;width:2px;height:2px;box-sizing:border-box;background:#999;"></div>
<div style="position:absolute;left:1436px;top:716px;width:2px;height:2px;box-sizing:border-box;background:#999;"></div>
<div class="t" style="left:1101.00px;top:737.86px;font-size:14.100px;color:#a0a0a0;transform:scaleX(0.9305);transform-origin:0 0;-webkit-text-stroke:0.2px;">Serveur DNS auxiliaire :</div>
<div style="position:absolute;left:1319px;top:732px;width:157px;height:25px;box-sizing:border-box;background:#f0f0f0;border:1px solid #7a7a7a;"></div>
<div style="position:absolute;left:1360px;top:748px;width:2px;height:2px;box-sizing:border-box;background:#999;"></div>
<div style="position:absolute;left:1398px;top:748px;width:2px;height:2px;box-sizing:border-box;background:#999;"></div>
<div style="position:absolute;left:1436px;top:748px;width:2px;height:2px;box-sizing:border-box;background:#999;"></div>
<div style="position:absolute;left:1101px;top:790px;width:17px;height:16px;box-sizing:border-box;border:1px solid #c0c0c0;background:#fff;"></div>
<div class="t" style="left:1121.30px;top:790.76px;font-size:14.100px;color:#6d6d6d;transform:scaleX(0.9629);transform-origin:0 0;-webkit-text-stroke:0.2px;">Valider les paramètres en quittant</div>
<div style="position:absolute;left:1421px;top:790px;width:110px;height:26px;box-sizing:border-box;background:#e1e1e1;border:1px solid #adadad;"></div>
<div class="t" style="left:1446.50px;top:796.56px;font-size:14.100px;color:#000;transform:scaleX(1.0081);transform-origin:0 0;-webkit-text-stroke:0.2px;">Avancé...</div>
<div style="position:absolute;left:1355px;top:845px;width:92px;height:26px;box-sizing:border-box;background:#e1e1e1;border:2px solid #0078d7;"></div>
<div class="t" style="left:1391.25px;top:852.06px;font-size:14.100px;color:#000;transform:scaleX(0.9572);transform-origin:0 0;-webkit-text-stroke:0.2px;">OK</div>
<div style="position:absolute;left:1457px;top:845px;width:91px;height:26px;box-sizing:border-box;background:#e1e1e1;border:1px solid #adadad;"></div>
<div class="t" style="left:1479.75px;top:852.06px;font-size:14.100px;color:#000;transform:scaleX(0.9362);transform-origin:0 0;-webkit-text-stroke:0.2px;">Annuler</div>
<svg style="position:absolute;left:1559px;top:895px" width="20" height="16" viewBox="0 0 20 16"><rect x="1.5" y="1.5" width="4" height="4" fill="#fff" stroke="#888" stroke-width="1"/><rect x="1.5" y="6.5" width="4" height="4" fill="#fff" stroke="#888" stroke-width="1"/><rect x="1.5" y="11.5" width="4" height="4" fill="#fff" stroke="#888" stroke-width="1"/><rect x="2.8" y="2.8" width="1.5" height="1.5" fill="#4a7aa0"/><rect x="2.8" y="7.8" width="1.5" height="1.5" fill="#777"/><rect x="2.8" y="12.8" width="1.5" height="1.5" fill="#a04a2a"/><path d="M7 3H11M13 3H17M7 8H11M13 8H17M7 13H11M13 13H17" stroke="#555" stroke-width="1.1"/></svg>
<div style="position:absolute;left:1588px;top:896px;width:6px;height:14px;box-sizing:border-box;border:1px solid #888;"></div>
<svg style="position:absolute;left:66px;top:181px" width="47" height="42" viewBox="0 0 47 42"><defs>
<linearGradient id="g8" x1="0" y1="0" x2="1" y2="0"><stop offset="0" stop-color="#0a3ad2"/><stop offset="0.42" stop-color="#2563ea"/><stop offset="0.5" stop-color="#b8d9fc"/><stop offset="0.75" stop-color="#dcecfe"/><stop offset="1" stop-color="#6aa4f2"/></linearGradient>
<linearGradient id="g12" x1="0" y1="0" x2="0" y2="1"><stop offset="0" stop-color="#fff" stop-opacity="0.25"/><stop offset="1" stop-color="#0a3ad2" stop-opacity="0.25"/></linearGradient>
<linearGradient id="g9" x1="0" y1="0" x2="1" y2="1"><stop offset="0" stop-color="#f6f6f6"/><stop offset="1" stop-color="#c6c6c6"/></linearGradient>
<linearGradient id="g10" x1="0" y1="0" x2="0" y2="1"><stop offset="0" stop-color="#1c55e0"/><stop offset="0.2" stop-color="#5a94f0"/><stop offset="0.5" stop-color="#eef5fe"/><stop offset="0.8" stop-color="#8ebaf5"/><stop offset="1" stop-color="#3373e6"/></linearGradient>
<radialGradient id="g11" cx="0.5" cy="0.35" r="0.65"><stop offset="0" stop-color="#f4f4f4"/><stop offset="1" stop-color="#c2c2c2"/></radialGradient>
</defs>
<path d="M18 1L46 3V27L18 25Z" fill="url(#g9)" stroke="#bdbdbd" stroke-width="0.7"/>
<path d="M19.8 2.8L44.2 4.5V24.8L19.8 23.2Z" fill="url(#g10)"/>
<path d="M30 26L29 30H41L39 26.5Z" fill="#cfcfcf"/>
<ellipse cx="35" cy="31" rx="8" ry="2.6" fill="url(#g11)"/>
<path d="M1 2.5L33.5 5.5V31L1 27.5Z" fill="url(#g9)" stroke="#b0b0b0" stroke-width="0.7"/>
<path d="M2.8 4.3L31.8 7V28.9L2.8 25.9Z" fill="url(#g8)"/>
<path d="M2.8 4.3L31.8 7V28.9L2.8 25.9Z" fill="url(#g12)"/>
<path d="M12 28.5L24 29.8L25 33L11 32Z" fill="#cbcbcb"/>
<ellipse cx="18.3" cy="36.2" rx="11.3" ry="5.2" fill="url(#g11)" stroke="#bcbcbc" stroke-width="0.5"/>
</svg>
<svg style="position:absolute;left:65px;top:223px" width="17" height="17" viewBox="0 0 17 17"><defs><linearGradient id="g13" x1="0" x2="0" y1="0" y2="1"><stop offset="0" stop-color="#f06060"/><stop offset="1" stop-color="#c00000"/></linearGradient></defs><path d="M2.2 2.2L14.8 14.8M14.8 2.2L2.2 14.8" stroke="url(#g13)" stroke-width="3.6" stroke-linecap="round"/></svg>
<svg style="position:absolute;left:100px;top:212px" width="22" height="28" viewBox="0 0 22 28"><ellipse cx="11" cy="14" rx="10.5" ry="13.7" fill="#1a80e6"/><path d="M5.5 9L15.5 18.5L11 22.5V5.5L15.5 9.5L5.5 19" fill="none" stroke="#fff" stroke-width="2" stroke-linejoin="miter"/></svg>
<svg style="position:absolute;left:384px;top:181px" width="47" height="42" viewBox="0 0 47 42"><defs>
<linearGradient id="g14" x1="0" y1="0" x2="1" y2="0"><stop offset="0" stop-color="#0a3ad2"/><stop offset="0.42" stop-color="#2563ea"/><stop offset="0.5" stop-color="#b8d9fc"/><stop offset="0.75" stop-color="#dcecfe"/><stop offset="1" stop-color="#6aa4f2"/></linearGradient>
<linearGradient id="g18" x1="0" y1="0" x2="0" y2="1"><stop offset="0" stop-color="#fff" stop-opacity="0.25"/><stop offset="1" stop-color="#0a3ad2" stop-opacity="0.25"/></linearGradient>
<linearGradient id="g15" x1="0" y1="0" x2="1" y2="1"><stop offset="0" stop-color="#f6f6f6"/><stop offset="1" stop-color="#c6c6c6"/></linearGradient>
<linearGradient id="g16" x1="0" y1="0" x2="0" y2="1"><stop offset="0" stop-color="#1c55e0"/><stop offset="0.2" stop-color="#5a94f0"/><stop offset="0.5" stop-color="#eef5fe"/><stop offset="0.8" stop-color="#8ebaf5"/><stop offset="1" stop-color="#3373e6"/></linearGradient>
<radialGradient id="g17" cx="0.5" cy="0.35" r="0.65"><stop offset="0" stop-color="#f4f4f4"/><stop offset="1" stop-color="#c2c2c2"/></radialGradient>
</defs>
<path d="M18 1L46 3V27L18 25Z" fill="url(#g15)" stroke="#bdbdbd" stroke-width="0.7"/>
<path d="M19.8 2.8L44.2 4.5V24.8L19.8 23.2Z" fill="url(#g16)"/>
<path d="M30 26L29 30H41L39 26.5Z" fill="#cfcfcf"/>
<ellipse cx="35" cy="31" rx="8" ry="2.6" fill="url(#g17)"/>
<path d="M1 2.5L33.5 5.5V31L1 27.5Z" fill="url(#g15)" stroke="#b0b0b0" stroke-width="0.7"/>
<path d="M2.8 4.3L31.8 7V28.9L2.8 25.9Z" fill="url(#g14)"/>
<path d="M2.8 4.3L31.8 7V28.9L2.8 25.9Z" fill="url(#g18)"/>
<path d="M12 28.5L24 29.8L25 33L11 32Z" fill="#cbcbcb"/>
<ellipse cx="18.3" cy="36.2" rx="11.3" ry="5.2" fill="url(#g17)" stroke="#bcbcbc" stroke-width="0.5"/>
</svg>
<svg style="position:absolute;left:384px;top:223px" width="17" height="17" viewBox="0 0 17 17"><defs><linearGradient id="g19" x1="0" x2="0" y1="0" y2="1"><stop offset="0" stop-color="#f06060"/><stop offset="1" stop-color="#c00000"/></linearGradient></defs><path d="M2.2 2.2L14.8 14.8M14.8 2.2L2.2 14.8" stroke="url(#g19)" stroke-width="3.6" stroke-linecap="round"/></svg>
<svg style="position:absolute;left:408px;top:216px" width="36" height="20" viewBox="0 0 36 20"><defs><linearGradient id="g20" x1="0" x2="0" y1="0" y2="1"><stop offset="0" stop-color="#e6edf4"/><stop offset="1" stop-color="#9aa8b8"/></linearGradient></defs><path d="M25 6.5L34.5 1.2L36.5 3.2L27.5 10Z" fill="#35acd0"/><path d="M26 6.5L34.5 2L35 3L27 8Z" fill="#8fdcef"/><path d="M1 11L17 4L28 7L12 14Z" fill="url(#g20)" stroke="#8796a6" stroke-width="0.6"/><path d="M12 6.2L16 4.6L19 5.6L15 7.2Z" fill="#c8e4f4"/><path d="M1 11V16.5L12 19.5V14Z" fill="#a7b3c1" stroke="#8796a6" stroke-width="0.6"/><path d="M12 14V19.5L28 13V7Z" fill="#c3ccd7" stroke="#8796a6" stroke-width="0.6"/><path d="M5 12.5L11 14.3V19L5 17.2Z" fill="#a9ad80"/><path d="M2 12L5 12.8V17L2 16Z" fill="#e6eaf0"/></svg>
<svg style="position:absolute;left:703px;top:181px" width="47" height="42" viewBox="0 0 47 42"><defs>
<linearGradient id="g21" x1="0" y1="0" x2="1" y2="0"><stop offset="0" stop-color="#0a3ad2"/><stop offset="0.42" stop-color="#2563ea"/><stop offset="0.5" stop-color="#b8d9fc"/><stop offset="0.75" stop-color="#dcecfe"/><stop offset="1" stop-color="#6aa4f2"/></linearGradient>
<linearGradient id="g25" x1="0" y1="0" x2="0" y2="1"><stop offset="0" stop-color="#fff" stop-opacity="0.25"/><stop offset="1" stop-color="#0a3ad2" stop-opacity="0.25"/></linearGradient>
<linearGradient id="g22" x1="0" y1="0" x2="1" y2="1"><stop offset="0" stop-color="#f6f6f6"/><stop offset="1" stop-color="#c6c6c6"/></linearGradient>
<linearGradient id="g23" x1="0" y1="0" x2="0" y2="1"><stop offset="0" stop-color="#1c55e0"/><stop offset="0.2" stop-color="#5a94f0"/><stop offset="0.5" stop-color="#eef5fe"/><stop offset="0.8" stop-color="#8ebaf5"/><stop offset="1" stop-color="#3373e6"/></linearGradient>
<radialGradient id="g24" cx="0.5" cy="0.35" r="0.65"><stop offset="0" stop-color="#f4f4f4"/><stop offset="1" stop-color="#c2c2c2"/></radialGradient>
</defs>
<path d="M18 1L46 3V27L18 25Z" fill="url(#g22)" stroke="#bdbdbd" stroke-width="0.7"/>
<path d="M19.8 2.8L44.2 4.5V24.8L19.8 23.2Z" fill="url(#g23)"/>
<path d="M30 26L29 30H41L39 26.5Z" fill="#cfcfcf"/>
<ellipse cx="35" cy="31" rx="8" ry="2.6" fill="url(#g24)"/>
<path d="M1 2.5L33.5 5.5V31L1 27.5Z" fill="url(#g22)" stroke="#b0b0b0" stroke-width="0.7"/>
<path d="M2.8 4.3L31.8 7V28.9L2.8 25.9Z" fill="url(#g21)"/>
<path d="M2.8 4.3L31.8 7V28.9L2.8 25.9Z" fill="url(#g25)"/>
<path d="M12 28.5L24 29.8L25 33L11 32Z" fill="#cbcbcb"/>
<ellipse cx="18.3" cy="36.2" rx="11.3" ry="5.2" fill="url(#g24)" stroke="#bcbcbc" stroke-width="0.5"/>
</svg>
<svg style="position:absolute;left:733px;top:213px" width="26" height="22" viewBox="0 0 26 22"><defs><linearGradient id="g26" x1="0" x2="0" y1="0" y2="1"><stop offset="0" stop-color="#3f9d5f"/><stop offset="1" stop-color="#b9f3c9"/></linearGradient></defs><rect x="0.50" y="17.66" width="4.60" height="3.84" rx="0.8" fill="url(#g26)" stroke="#2a7443" stroke-width="1"/><rect x="5.70" y="13.37" width="4.60" height="8.13" rx="0.8" fill="url(#g26)" stroke="#2a7443" stroke-width="1"/><rect x="10.90" y="9.08" width="4.60" height="12.42" rx="0.8" fill="url(#g26)" stroke="#2a7443" stroke-width="1"/><rect x="16.10" y="4.79" width="4.60" height="16.71" rx="0.8" fill="url(#g26)" stroke="#2a7443" stroke-width="1"/><rect x="21.30" y="0.50" width="4.60" height="21.00" rx="0.8" fill="url(#g26)" stroke="#2a7443" stroke-width="1"/></svg>
<svg style="position:absolute;left:9px;top:9px" width="20" height="20" viewBox="0 0 20 20"><defs><linearGradient id="g27" x1="0" x2="1"><stop offset="0" stop-color="#e6cf72"/><stop offset="0.5" stop-color="#fbeeb0"/><stop offset="1" stop-color="#d9bd5a"/></linearGradient><linearGradient id="g28" x1="0" x2="1" y1="0" y2="0.4"><stop offset="0" stop-color="#0a18a8"/><stop offset="0.45" stop-color="#1e38d0"/><stop offset="0.6" stop-color="#dfe6ff"/><stop offset="1" stop-color="#8a9af0"/></linearGradient><linearGradient id="g29" x1="0" x2="1" y1="0" y2="1"><stop offset="0" stop-color="#dfe4ff"/><stop offset="0.6" stop-color="#9aa6f2"/><stop offset="1" stop-color="#10209a"/></linearGradient></defs><path d="M0.5 0.5H7V13H0.5Z" fill="url(#g27)"/><path d="M11 4L19 5V11.5L11 11Z" fill="url(#g29)"/><path d="M6.5 5L15 5.5V13.5L6.5 13Z" fill="url(#g28)"/><path d="M3.5 15L6 16" stroke="#777" stroke-width="1.2"/><path d="M6 16L13 18" stroke="#25b04a" stroke-width="2.2"/></svg>
<svg style="position:absolute;left:137px;top:48px" width="20" height="20" viewBox="0 0 20 20"><defs><linearGradient id="g30" x1="0" x2="1"><stop offset="0" stop-color="#e6cf72"/><stop offset="0.5" stop-color="#fbeeb0"/><stop offset="1" stop-color="#d9bd5a"/></linearGradient><linearGradient id="g31" x1="0" x2="1" y1="0" y2="0.4"><stop offset="0" stop-color="#0a18a8"/><stop offset="0.45" stop-color="#1e38d0"/><stop offset="0.6" stop-color="#dfe6ff"/><stop offset="1" stop-color="#8a9af0"/></linearGradient><linearGradient id="g32" x1="0" x2="1" y1="0" y2="1"><stop offset="0" stop-color="#dfe4ff"/><stop offset="0.6" stop-color="#9aa6f2"/><stop offset="1" stop-color="#10209a"/></linearGradient></defs><path d="M0.5 0.5H7V13H0.5Z" fill="url(#g30)"/><path d="M11 4L19 5V11.5L11 11Z" fill="url(#g32)"/><path d="M6.5 5L15 5.5V13.5L6.5 13Z" fill="url(#g31)"/><path d="M3.5 15L6 16" stroke="#777" stroke-width="1.2"/><path d="M6 16L13 18" stroke="#25b04a" stroke-width="2.2"/></svg>
</body></html>
